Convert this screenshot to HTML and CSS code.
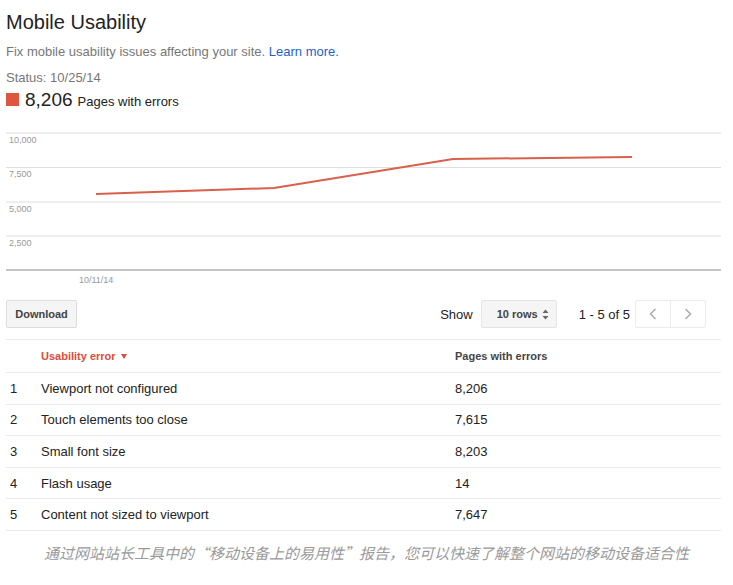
FILE: index.html
```html
<!DOCTYPE html>
<html lang="en">
<head>
  <meta charset="UTF-8">
  <meta name="viewport" content="width=device-width, initial-scale=1.0">
  <title>Mobile Usability</title>
  <link rel="stylesheet" href="styles.css">
</head>
<body>
  <div class="report">
    <h1>Mobile Usability</h1>
    <p class="intro">Fix mobile usability issues affecting your site. <a href="#">Learn more.</a></p>
    <p class="status">Status: 10/25/14</p>
    <div class="total">
      <span class="swatch"></span><span class="total-num">8,206</span><span class="total-label">Pages with errors</span>
    </div>

    <!-- errors over time -->
    <svg class="chart" width="715" height="170" viewBox="0 0 715 170">
      <g class="grid">
        <line x1="0" y1="13" x2="715" y2="13"></line>
        <line x1="0" y1="47.5" x2="715" y2="47.5"></line>
        <line x1="0" y1="82" x2="715" y2="82"></line>
        <line x1="0" y1="116" x2="715" y2="116"></line>
      </g>
      <line class="axis" x1="0" y1="150" x2="715" y2="150"></line>
      <g class="labels">
        <text x="3" y="23">10,000</text>
        <text x="3" y="57">7,500</text>
        <text x="3" y="92">5,000</text>
        <text x="3" y="126">2,500</text>
        <text x="73" y="163">10/11/14</text>
      </g>
      <polyline class="series" points="90,74 268,68 447,39 626,37"></polyline>
    </svg>

    <div class="toolbar">
      <button class="btn">Download</button>
      <div class="paging">
        <span>Show</span>
        <div class="select">
          <span>10 rows</span>
          <svg width="7" height="11" viewBox="0 0 7 11">
            <path d="M3.5 0.5 L6.5 4 L0.5 4 Z M3.5 10.5 L6.5 7 L0.5 7 Z" fill="#666"></path>
          </svg>
        </div>
        <span class="range">1 - 5 of 5</span>
        <div class="pager">
          <span class="page-btn">
            <svg width="8" height="12" viewBox="0 0 8 12"><polyline points="6.5,1 1.5,6 6.5,11" fill="none" stroke="#aaa" stroke-width="1.5"></polyline></svg>
          </span>
          <span class="page-btn">
            <svg width="8" height="12" viewBox="0 0 8 12"><polyline points="1.5,1 6.5,6 1.5,11" fill="none" stroke="#aaa" stroke-width="1.5"></polyline></svg>
          </span>
        </div>
      </div>
    </div>

    <div class="table">
      <div class="row head">
        <span></span>
        <span class="sorted">Usability error
          <svg class="arrow" width="6" height="5" viewBox="0 0 6 5"><path d="M0 0 L6 0 L3 5 Z" fill="#dd4b39"></path></svg>
        </span>
        <span>Pages with errors</span>
      </div>
      <div class="row"><span>1</span><span>Viewport not configured</span><span>8,206</span></div>
      <div class="row"><span>2</span><span>Touch elements too close</span><span>7,615</span></div>
      <div class="row"><span>3</span><span>Small font size</span><span>8,203</span></div>
      <div class="row"><span>4</span><span>Flash usage</span><span>14</span></div>
      <div class="row"><span>5</span><span>Content not sized to viewport</span><span>7,647</span></div>
    </div>
  </div>

  <p class="caption">通过网站站长工具中的“移动设备上的易用性”报告，您可以快速了解整个网站的移动设备适合性</p>
</body>
</html>
```

FILE: styles.css
```css
body {
    margin: 0;
    font-family: "Liberation Sans", Arial, sans-serif;
    color: #222;
    background: #fff;
}
.report {
    padding: 10px 12px 0 6px;
}
h1 {
    margin: 0;
    font-size: 20px;
    font-weight: normal;
    line-height: 24px;
    color: #222;
}
.intro,
.status {
    margin: 10px 0 0;
    font-size: 13px;
    line-height: 16px;
    color: #777;
}
.intro a {
    color: #1f5fc8;
    text-decoration: none;
}
.total {
    margin-top: 3px;
    line-height: 22px;
}
.swatch {
    display: inline-block;
    width: 13px;
    height: 13px;
    margin-right: 6px;
    background: #dd5640;
}
.total-num {
    font-size: 19px;
}
.total-label {
    margin-left: 5px;
    font-size: 13px;
}

.chart {
    display: block;
    margin-top: 7px;
}
.grid line {
    stroke: #dedede;
    stroke-width: 1;
}
.axis {
    stroke: #c4c4c4;
    stroke-width: 2;
}
.labels text {
    font-family: "Liberation Sans", Arial, sans-serif;
    font-size: 9px;
    fill: #999;
}
.series {
    fill: none;
    stroke: #d9604a;
    stroke-width: 2;
}

.toolbar {
    margin-top: 10px;
    display: flex;
    justify-content: space-between;
    align-items: center;
    height: 28px;
}
.btn {
    height: 28px;
    width: 71px;
    padding: 0;
    border: 1px solid #dcdcdc;
    border-radius: 2px;
    background: #f5f5f5;
    font-family: inherit;
    font-size: 11px;
    font-weight: bold;
    color: #444;
}
.paging {
    display: flex;
    align-items: center;
    margin-right: 15px;
    font-size: 13px;
}
.select {
    display: flex;
    align-items: center;
    justify-content: space-between;
    box-sizing: border-box;
    width: 76px;
    height: 28px;
    margin-left: 8px;
    padding: 0 7px 0 15px;
    border: 1px solid #e4e4e4;
    border-radius: 2px;
    background: #f5f5f5;
    font-size: 11px;
    font-weight: bold;
    color: #444;
}
.range {
    margin-left: 22px;
}
.pager {
    display: flex;
    margin-left: 5px;
    border: 1px solid #ececec;
    border-radius: 2px;
}
.page-btn {
    display: flex;
    align-items: center;
    justify-content: center;
    width: 34px;
    height: 26px;
}
.page-btn + .page-btn {
    border-left: 1px solid #ececec;
}

.table {
    margin-top: 11px;
}
.row {
    display: grid;
    grid-template-columns: 35px 414px 1fr;
    align-items: center;
    box-sizing: border-box;
    height: 31.6px;
    border-bottom: 1px solid #ebebeb;
    font-size: 13px;
    color: #222;
}
.row span:first-child {
    padding-left: 4px;
}
.row.head {
    height: 34px;
    border-top: 1px solid #ebebeb;
    font-size: 11px;
    font-weight: bold;
    color: #444;
}
.sorted {
    color: #dd4b39;
}
.arrow {
    margin-left: 2px;
    vertical-align: 1px;
}

.caption {
    margin: 12px 0 0;
    text-align: center;
    font-family: "Noto Sans CJK SC", sans-serif;
    font-size: 15px;
    font-style: italic;
    line-height: 20px;
    color: #9a9a9a;
}
```
